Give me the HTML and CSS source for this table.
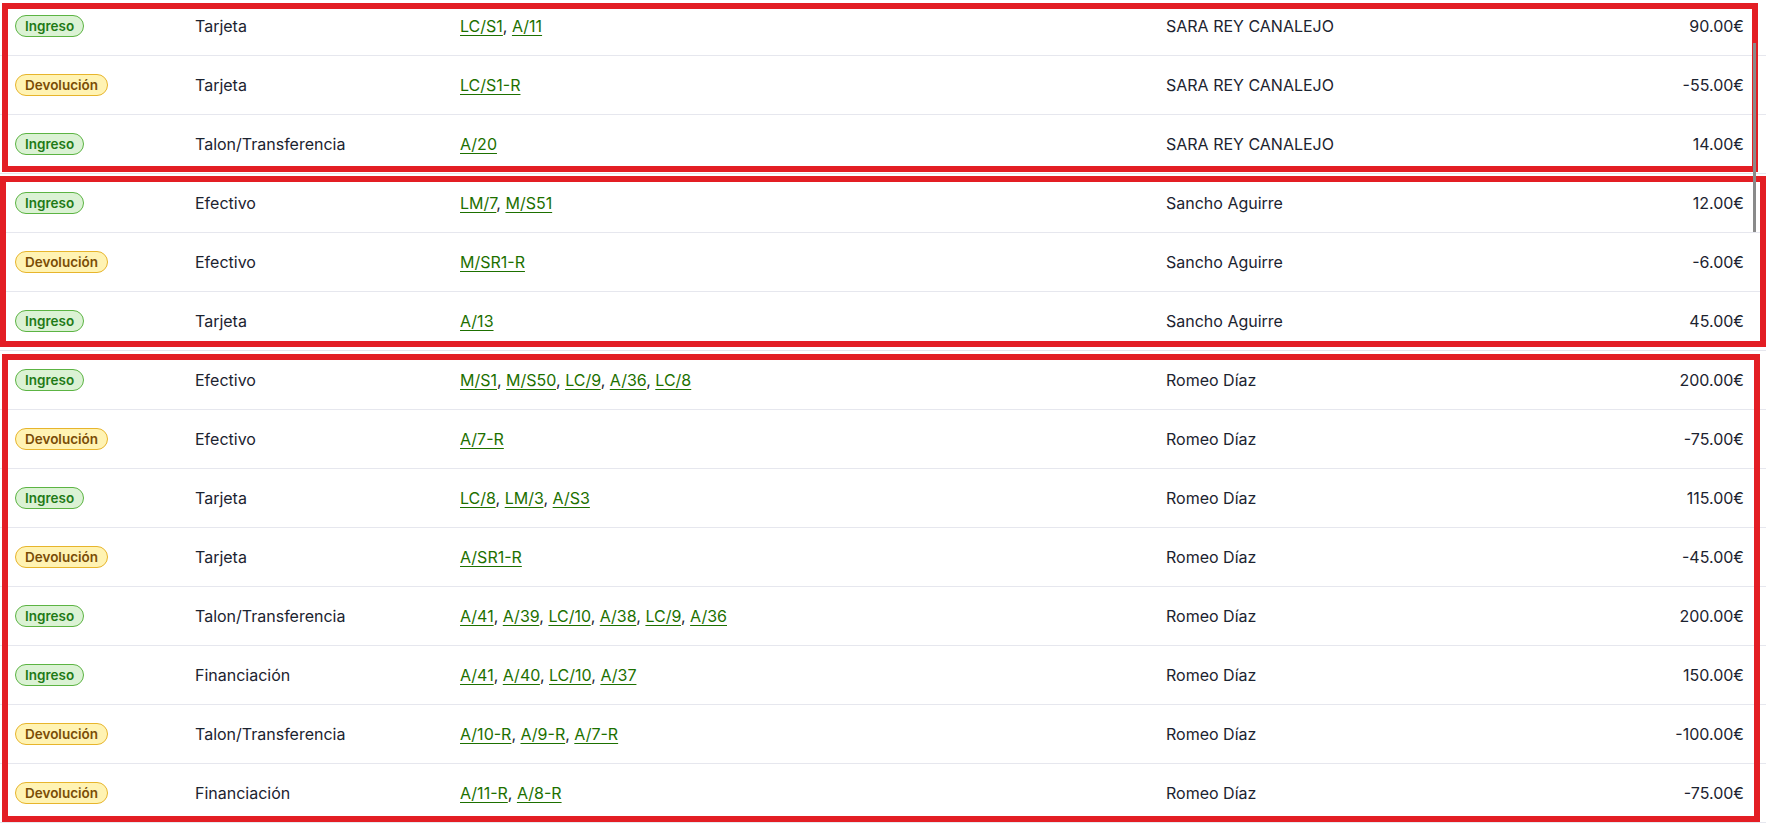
FILE: index.html
```html
<!DOCTYPE html>
<html lang="es">
<head>
<meta charset="UTF-8" />
<meta name="viewport" content="width=device-width, initial-scale=1" />
<title>Movimientos</title>
<link rel="stylesheet" href="styles.css">
</head>
<body>
  <div class="list">
    <div class="group group-a">
      <div class="row">
        <span class="badge ingreso">Ingreso</span>
        <span>Tarjeta</span>
        <span class="refs"><a href="#">LC/S1</a>, <a href="#">A/11</a></span>
        <span>SARA REY CANALEJO</span>
        <span class="amount">90.00€</span>
      </div>
      <div class="row">
        <span class="badge devolucion">Devolución</span>
        <span>Tarjeta</span>
        <span class="refs"><a href="#">LC/S1-R</a></span>
        <span>SARA REY CANALEJO</span>
        <span class="amount">-55.00€</span>
      </div>
      <div class="row">
        <span class="badge ingreso">Ingreso</span>
        <span>Talon/Transferencia</span>
        <span class="refs"><a href="#">A/20</a></span>
        <span>SARA REY CANALEJO</span>
        <span class="amount">14.00€</span>
      </div>
    </div>

    <div class="group group-b">
      <div class="row">
        <span class="badge ingreso">Ingreso</span>
        <span>Efectivo</span>
        <span class="refs"><a href="#">LM/7</a>, <a href="#">M/S51</a></span>
        <span>Sancho Aguirre</span>
        <span class="amount">12.00€</span>
      </div>
      <div class="row">
        <span class="badge devolucion">Devolución</span>
        <span>Efectivo</span>
        <span class="refs"><a href="#">M/SR1-R</a></span>
        <span>Sancho Aguirre</span>
        <span class="amount">-6.00€</span>
      </div>
      <div class="row">
        <span class="badge ingreso">Ingreso</span>
        <span>Tarjeta</span>
        <span class="refs"><a href="#">A/13</a></span>
        <span>Sancho Aguirre</span>
        <span class="amount">45.00€</span>
      </div>
    </div>

    <div class="group group-c">
      <div class="row">
        <span class="badge ingreso">Ingreso</span>
        <span>Efectivo</span>
        <span class="refs"><a href="#">M/S1</a>, <a href="#">M/S50</a>, <a href="#">LC/9</a>, <a href="#">A/36</a>, <a href="#">LC/8</a></span>
        <span>Romeo Díaz</span>
        <span class="amount">200.00€</span>
      </div>
      <div class="row">
        <span class="badge devolucion">Devolución</span>
        <span>Efectivo</span>
        <span class="refs"><a href="#">A/7-R</a></span>
        <span>Romeo Díaz</span>
        <span class="amount">-75.00€</span>
      </div>
      <div class="row">
        <span class="badge ingreso">Ingreso</span>
        <span>Tarjeta</span>
        <span class="refs"><a href="#">LC/8</a>, <a href="#">LM/3</a>, <a href="#">A/S3</a></span>
        <span>Romeo Díaz</span>
        <span class="amount">115.00€</span>
      </div>
      <div class="row">
        <span class="badge devolucion">Devolución</span>
        <span>Tarjeta</span>
        <span class="refs"><a href="#">A/SR1-R</a></span>
        <span>Romeo Díaz</span>
        <span class="amount">-45.00€</span>
      </div>
      <div class="row">
        <span class="badge ingreso">Ingreso</span>
        <span>Talon/Transferencia</span>
        <span class="refs"><a href="#">A/41</a>, <a href="#">A/39</a>, <a href="#">LC/10</a>, <a href="#">A/38</a>, <a href="#">LC/9</a>, <a href="#">A/36</a></span>
        <span>Romeo Díaz</span>
        <span class="amount">200.00€</span>
      </div>
      <div class="row">
        <span class="badge ingreso">Ingreso</span>
        <span>Financiación</span>
        <span class="refs"><a href="#">A/41</a>, <a href="#">A/40</a>, <a href="#">LC/10</a>, <a href="#">A/37</a></span>
        <span>Romeo Díaz</span>
        <span class="amount">150.00€</span>
      </div>
      <div class="row">
        <span class="badge devolucion">Devolución</span>
        <span>Talon/Transferencia</span>
        <span class="refs"><a href="#">A/10-R</a>, <a href="#">A/9-R</a>, <a href="#">A/7-R</a></span>
        <span>Romeo Díaz</span>
        <span class="amount">-100.00€</span>
      </div>
      <div class="row">
        <span class="badge devolucion">Devolución</span>
        <span>Financiación</span>
        <span class="refs"><a href="#">A/11-R</a>, <a href="#">A/8-R</a></span>
        <span>Romeo Díaz</span>
        <span class="amount">-75.00€</span>
      </div>
    </div>

    <div class="scroll-thumb"></div>
  </div>
</body>
</html>
```

FILE: styles.css
```css
/* Base */
* {
  box-sizing: border-box;
}
body {
  margin: 0;
  font-family: Inter, 'Noto Sans', sans-serif;
  font-size: 16px;
  color: #1c2330;
  background: #fff;
  overflow: hidden;
}

/* List scrolled a few pixels */
.list {
  position: relative;
  margin-top: -3px;
}

.row {
  display: grid;
  grid-template-columns: 180px 265px 706px 1fr auto;
  align-items: center;
  height: 59px;
  padding: 0 22px 0 15px;
  border-bottom: 1px solid #e6e7ee;
}

/* Badges */
.badge {
  justify-self: start;
  display: inline-flex;
  align-items: center;
  height: 22px;
  padding: 0 9px;
  border-radius: 11px;
  border: 1px solid;
  font-size: 13.5px;
  font-weight: 600;
}
.badge.ingreso {
  background: #dbf2d4;
  border-color: #5cb443;
  color: #1f7a17;
}
.badge.devolucion {
  background: #fff3b3;
  border-color: #e7b52c;
  color: #7a4d06;
}

/* References */
.refs a {
  color: #1d7000;
  text-decoration: underline;
  text-underline-offset: 3px;
}
.amount {
  text-align: right;
}

/* Highlight boxes over each client group */
.group {
  position: relative;
}
.group::after {
  content: '';
  position: absolute;
  border: 6px solid #e31e24;
  pointer-events: none;
}
.group-a::after {
  top: 6px;
  bottom: 2px;
  left: 2px;
  right: 8px;
}
.group-b::after {
  top: 2px;
  bottom: 4px;
  left: 0;
  right: 0;
}
.group-c::after {
  top: 3px;
  bottom: 1px;
  left: 2px;
  right: 6px;
}

.scroll-thumb {
  position: absolute;
  top: 46px;
  right: 10px;
  width: 3px;
  height: 189px;
  background: #8a8a8a;
}
```
